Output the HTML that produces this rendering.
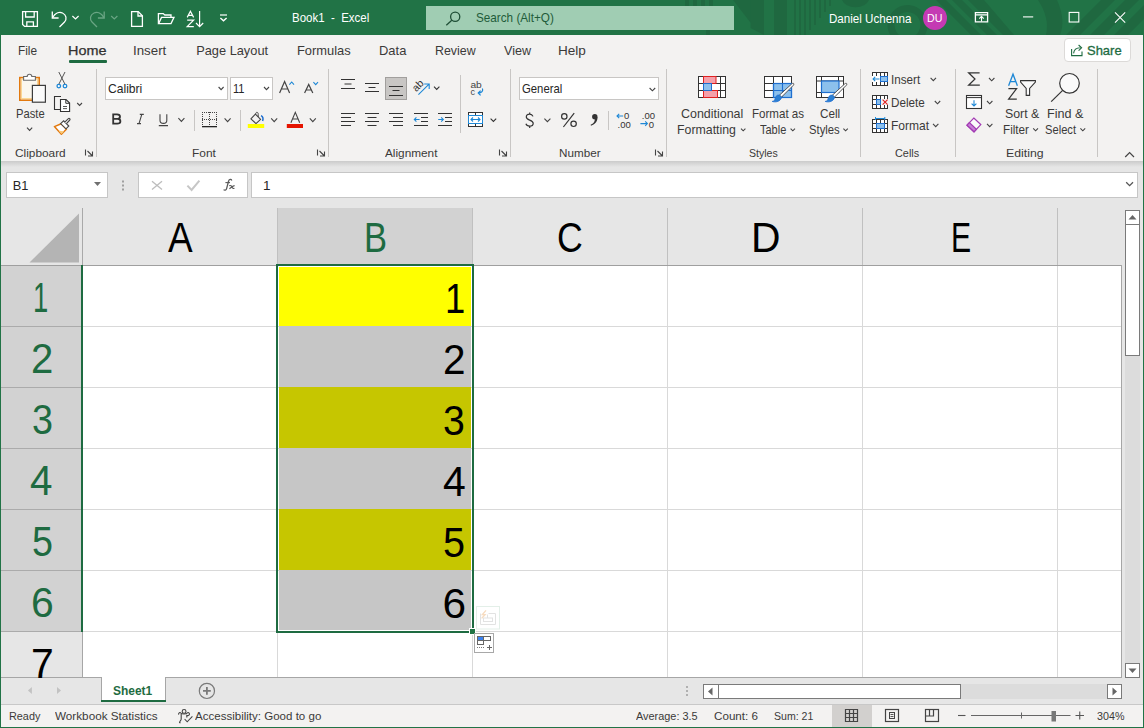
<!DOCTYPE html>
<html><head><meta charset="utf-8">
<style>
*{margin:0;padding:0;box-sizing:border-box}
html,body{width:1144px;height:728px;overflow:hidden;background:#f3f2f1;font-family:"Liberation Sans",sans-serif;color:#262626;position:relative}
.a{position:absolute}
.t{position:absolute;white-space:pre}
svg{position:absolute;overflow:visible}
</style></head><body>
<div class="a" style="left:0;top:0;width:1144px;height:728px;background:#f3f2f1"></div>
<div class="a" style="left:0;top:0;width:1144px;height:35px;background:#217346;overflow:hidden">
<svg width="1144" height="35" style="left:0;top:0"><g fill="#1f6840">
<rect x="685" y="0" width="4" height="7"/><rect x="693" y="0" width="4" height="7"/><rect x="701" y="0" width="4" height="7"/><rect x="709" y="0" width="4" height="7"/>
<rect x="706" y="29" width="4" height="6"/>
<polygon points="733,0 750.8,0 750.8,23"/>
<polygon points="750.6,0 764,0 764,35 750.6,28"/>
<rect x="774" y="0" width="13" height="35"/>
<rect x="794" y="0" width="2" height="35"/><rect x="799" y="0" width="2" height="35"/><rect x="804" y="0" width="2" height="35"/><rect x="809" y="0" width="2" height="30"/><rect x="814" y="0" width="2" height="25"/><rect x="819" y="0" width="2" height="18"/><rect x="824" y="0" width="2" height="12"/><rect x="829" y="0" width="2" height="6"/>
<path d="M842,0 A14,10 0 0 0 869,0 Z"/>
<path d="M907.5,5 A20,20 0 1 0 907.6,5 Z M907.5,12 A13,13 0 1 1 907.4,12 Z" fill-rule="evenodd"/>
<polygon points="936,0 946,0 981,35 971,35"/><polygon points="952,0 962,0 997,35 987,35"/><polygon points="968,0 984,0 1014,35 1003,35"/>
<path d="M1038,0 L1057,0 Q1066,20 1060,35 L1046,35 Q1050,18 1038,0 Z"/>
<polygon points="1066,35 1080,35 1115,0 1101,0"/><polygon points="1090,35 1104,35 1139,0 1125,0"/><polygon points="1114,35 1128,35 1144,19 1144,5"/>
</g></svg>

</div>
<div class="a" style="left:426px;top:6px;width:308px;height:24px;background:#a0cdb3"></div>
<div class="a" style="left:923px;top:6px;width:24px;height:24px;border-radius:12px;background:#c43ab3"></div>
<svg width="1144" height="35" style="left:0;top:0" fill="none" stroke="#fff" stroke-width="1.3">
<!-- save -->
<path d="M22.6,11.6 H37.4 V26.4 H24.6 L22.6,24.4 Z"/>
<path d="M25.6,11.6 V17 H34.2 V11.6"/>
<path d="M26.8,26.4 V21.8 H33.4 V26.4"/>
<!-- undo -->
<path d="M52.3,11.5 V18 H58.6"/>
<path d="M52.6,17.6 C55,13.5 59,11.5 62.5,13 C66.5,14.8 67,19.5 64.5,22 L59.5,27"/>
<path d="M72.4,16 L75.5,19 L78.6,16" stroke-width="1.2"/>
<!-- redo faded -->
<g stroke="#6aa584">
<path d="M104.2,11.5 V18 H97.9"/>
<path d="M103.9,17.6 C101.5,13.5 97.5,11.5 94,13 C90,14.8 89.5,19.5 92,22 L97,27"/>
<path d="M111.2,16 L114.3,19 L117.4,16" stroke-width="1.2"/>
</g>
<!-- new doc -->
<path d="M131.6,11.6 H138.2 L142.4,15.8 V26.4 H131.6 Z"/>
<path d="M138,11.6 V16 H142.4"/>
<!-- open folder -->
<path d="M158.4,23.6 V13.6 H163.2 L164.8,15 H171 V17.4"/>
<path d="M158.6,23.6 L161.5,17.4 H174 L171,23.6 Z"/>
<!-- sort AZ -->
<path d="M187.2,17.4 L190.4,11.2 L193.6,17.4 M188.2,15.4 H192.6" stroke-width="1.2"/>
<path d="M187.2,20.2 H193.6 L187.2,26.6 H193.8" stroke-width="1.2"/>
<path d="M199.6,11 V26.6 M196,23 L199.6,26.6 L203.2,23" stroke-width="1.2"/>
<!-- customize -->
<path d="M220,15 H227" stroke-width="1.2"/>
<path d="M220.4,18 L223.5,20.8 L226.6,18" stroke-width="1.4"/>
<!-- search -->
<g stroke="#1f4e36" stroke-width="1.3"><circle cx="455.2" cy="16.8" r="4.6"/><path d="M451.8,20.3 L446.3,25.3"/></g>
<!-- ribbon display -->
<path d="M975.4,12.6 H987.6 V21.8 H975.4 Z M975.4,14.8 H987.6"/>
<path d="M981.5,21.6 V16.6 M979.3,18.6 L981.5,16.4 L983.7,18.6" stroke-width="1.1"/>
<!-- minimize -->
<path d="M1023,16.9 H1033.2" stroke-width="1.1"/>
<!-- maximize -->
<rect x="1069.2" y="12.4" width="9.6" height="9.6" stroke-width="1.1"/>
<!-- close -->
<path d="M1115,12.4 L1125.2,22.6 M1125.2,12.4 L1115,22.6" stroke-width="1.1"/>
</svg>

<div class="a" style="left:1px;top:35px;width:1142px;height:126px;background:#f3f2f1"></div>
<div class="a" style="left:69px;top:60px;width:38px;height:3px;background:#1e6b41;border-radius:1px"></div>
<div class="a" style="left:1063.5px;top:38px;width:67px;height:23.5px;background:#fff;border:1px solid #dcdad8;border-radius:4px"></div>
<div class="a" style="left:96px;top:69px;width:1px;height:88px;background:#c8c6c4"></div>
<div class="a" style="left:328px;top:69px;width:1px;height:88px;background:#c8c6c4"></div>
<div class="a" style="left:510px;top:69px;width:1px;height:88px;background:#c8c6c4"></div>
<div class="a" style="left:666px;top:69px;width:1px;height:88px;background:#c8c6c4"></div>
<div class="a" style="left:860px;top:69px;width:1px;height:88px;background:#c8c6c4"></div>
<div class="a" style="left:955px;top:69px;width:1px;height:88px;background:#c8c6c4"></div>
<div class="a" style="left:1097px;top:69px;width:1px;height:88px;background:#c8c6c4"></div>
<div class="a" style="left:194px;top:110px;width:1px;height:21px;background:#c8c6c4"></div>
<div class="a" style="left:240px;top:110px;width:1px;height:21px;background:#c8c6c4"></div>
<div class="a" style="left:460px;top:75px;width:1px;height:58px;background:#c8c6c4"></div>
<div class="a" style="left:608px;top:111px;width:1px;height:19px;background:#c8c6c4"></div>
<div class="a" style="left:105px;top:77px;width:123px;height:23px;background:#fff;border:1px solid #c8c6c4"></div>
<div class="a" style="left:230px;top:77px;width:43px;height:23px;background:#fff;border:1px solid #c8c6c4"></div>
<div class="a" style="left:519px;top:77px;width:140px;height:23px;background:#fff;border:1px solid #c8c6c4"></div>
<div class="a" style="left:385px;top:77px;width:22px;height:23px;background:#c8c6c4;border:1px solid #a19f9d"></div>
<svg width="1144" height="170" style="left:0;top:0" fill="none" stroke-linejoin="miter">
<!-- ===== Clipboard ===== -->
<rect x="19.8" y="77.6" width="19.4" height="22.6" fill="#fbf7ee" stroke="#e2790f" stroke-width="1.6"/>
<rect x="21.4" y="79.2" width="16.2" height="19.4" fill="none" stroke="#fbd38a" stroke-width="1"/>
<path d="M23.6,80.3 V76.5 H27.2 A2.3,2.3 0 0 1 31.8,76.5 H35.4 V80.3 Z" fill="#fff" stroke="#6b6b6b" stroke-width="1.1"/>
<rect x="32.4" y="85.4" width="13" height="16.8" fill="#fafafa" stroke="#3c3c3c" stroke-width="1.2"/>
<!-- scissors -->
<path d="M58.8,72 L65,84.3 M65,72 L58.8,84.3" stroke="#555" stroke-width="1"/>
<circle cx="58.8" cy="86.1" r="1.8" fill="#fff" stroke="#1e88d6" stroke-width="1.3"/>
<circle cx="65" cy="86.1" r="1.8" fill="#fff" stroke="#1e88d6" stroke-width="1.3"/>
<!-- copy -->
<path d="M61,96.5 H54.5 V109.5 H60" stroke="#333" stroke-width="1.1"/>
<path d="M60.5,99.5 H66 L69.6,103.1 V111.5 H60.5 Z" fill="#fff" stroke="#333" stroke-width="1.1" stroke-linejoin="miter"/>
<path d="M65.8,99.6 V103.3 H69.6" stroke="#333" stroke-width="1"/>
<path d="M63,106.5 H67 M63,108.6 H67" stroke="#444" stroke-width="0.9"/>
<path d="M77.2,103 L79.6,105.4 L82,103" stroke="#444" stroke-width="1.1"/>
<!-- format painter -->
<path d="M54.4,126.6 L61.2,123.8 L66.4,129.2 L61.4,134.2 Z" fill="#fff" stroke="#e2790f" stroke-width="1.5" stroke-linejoin="round"/>
<path d="M58.4,130.4 L64.2,131.4 L61.4,134 Z" fill="#f9c978"/>
<path d="M60.6,123.6 L63.6,120.8 L68.8,126 L66,128.8 Z" fill="#fff" stroke="#444" stroke-width="1.1"/>
<path d="M64.8,122.2 L68.4,118.6 C69.2,117.8 70.6,119.2 69.8,120 L66.4,123.6" fill="#fff" stroke="#444" stroke-width="1.1"/>
<path d="M27,127.6 L29.6,130.4 L32.2,127.6" stroke="#444" stroke-width="1.1"/>
<!-- launchers -->
<g stroke="#444" stroke-width="1.1">
<path d="M85.5,149.5 V155.5 M87.5,151 L92,155.5 M88,156 H92.5 V151.5"/>
<path d="M317.5,149.5 V155.5 M319.5,151 L324,155.5 M320,156 H324.5 V151.5"/>
<path d="M499.5,149.5 V155.5 M501.5,151 L506,155.5 M502,156 H506.5 V151.5"/>
<path d="M655.5,149.5 V155.5 M657.5,151 L662,155.5 M658,156 H662.5 V151.5"/>
</g>
<!-- ===== Font ===== -->
<g stroke="#444" stroke-width="1.1">
<path d="M218.6,87 L221.1,89.6 L223.6,87"/>
<path d="M264,87 L266.5,89.6 L269,87"/>
<path d="M178.4,118.2 L181.4,121.4 L184.4,118.2"/>
<path d="M224.6,118.4 L227.6,121.6 L230.6,118.4"/>
<path d="M271.2,118.4 L274.2,121.6 L277.2,118.4"/>
<path d="M309.8,118.4 L312.8,121.6 L315.8,118.4"/>
</g>
<!-- grow/shrink font -->
<path d="M279.6,93 L284.6,81.6 L289.6,93 M281.4,89 H287.8" stroke="#444" stroke-width="1.2"/>
<path d="M289.4,84.6 L291.7,82 L294,84.6" stroke="#1e88d6" stroke-width="1.1"/>
<path d="M304.6,93 L308.7,84.4 L312.8,93 M306,90 H311.4" stroke="#444" stroke-width="1.2"/>
<path d="M313.4,82.2 L315.7,84.6 L318,82.2" stroke="#1e88d6" stroke-width="1.1"/>
<!-- B I U -->
<path d="M113.2,114.4 H117 C119.2,114.4 120,115.6 120,116.8 C120,118 119,118.8 117.6,118.8 C119.4,118.8 120.4,119.8 120.4,121.2 C120.4,122.6 119.4,123.6 117.2,123.6 H113.2 Z M113.2,118.8 H117.6" stroke="#333" stroke-width="1.8"/>
<path d="M139.8,114.4 H143.8 M137,123.6 H141 M141.8,114.4 L139,123.6" stroke="#444" stroke-width="1.1"/>
<path d="M160,114.2 V120.2 C160,122.2 161.4,123.4 163.4,123.4 C165.4,123.4 166.8,122.2 166.8,120.2 V114.2 M158.8,125.6 H168" stroke="#444" stroke-width="1.1"/>
<!-- borders -->
<g fill="#444">
<rect x="202" y="112" width="1" height="1"/>
<rect x="202" y="119" width="1" height="1"/>
<rect x="204" y="112" width="1" height="1"/>
<rect x="204" y="119" width="1" height="1"/>
<rect x="206" y="112" width="1" height="1"/>
<rect x="206" y="119" width="1" height="1"/>
<rect x="208" y="112" width="1" height="1"/>
<rect x="208" y="119" width="1" height="1"/>
<rect x="210" y="112" width="1" height="1"/>
<rect x="210" y="119" width="1" height="1"/>
<rect x="212" y="112" width="1" height="1"/>
<rect x="212" y="119" width="1" height="1"/>
<rect x="214" y="112" width="1" height="1"/>
<rect x="214" y="119" width="1" height="1"/>
<rect x="216" y="112" width="1" height="1"/>
<rect x="216" y="119" width="1" height="1"/>
<rect x="202" y="112" width="1" height="1"/>
<rect x="216" y="112" width="1" height="1"/>
<rect x="209" y="112" width="1" height="1"/>
<rect x="202" y="114" width="1" height="1"/>
<rect x="216" y="114" width="1" height="1"/>
<rect x="209" y="114" width="1" height="1"/>
<rect x="202" y="116" width="1" height="1"/>
<rect x="216" y="116" width="1" height="1"/>
<rect x="209" y="116" width="1" height="1"/>
<rect x="202" y="118" width="1" height="1"/>
<rect x="216" y="118" width="1" height="1"/>
<rect x="209" y="118" width="1" height="1"/>
<rect x="202" y="120" width="1" height="1"/>
<rect x="216" y="120" width="1" height="1"/>
<rect x="209" y="120" width="1" height="1"/>
<rect x="202" y="122" width="1" height="1"/>
<rect x="216" y="122" width="1" height="1"/>
<rect x="209" y="122" width="1" height="1"/>
<rect x="202" y="124" width="1" height="1"/>
<rect x="216" y="124" width="1" height="1"/>
<rect x="209" y="124" width="1" height="1"/>
</g>
<rect x="202" y="126" width="15" height="1.3" fill="#222"/>
<!-- fill color -->
<path d="M250.9,118.8 L255.4,114.2 L260.6,119.4 L256,123.6 Z" stroke="#444" stroke-width="1.1" stroke-linejoin="round"/>
<path d="M255.6,114.4 C255.6,111.6 258.4,111.6 258.2,114.4 V117" stroke="#444" stroke-width="1"/>
<path d="M261,115.6 C262.8,116.4 263.4,118.6 262.6,121" stroke="#1e6fd0" stroke-width="1.5"/>
<rect x="247.8" y="124" width="16.4" height="4" fill="#ffff00"/>
<!-- font color -->
<path d="M290.9,122.8 L295.3,112.3 L299.7,122.8 M292.4,119 H298.2" stroke="#444" stroke-width="1.1"/>
<rect x="286.8" y="124" width="16.2" height="4" fill="#e51400"/>
<!-- ===== Alignment ===== -->
<g stroke="#333" stroke-width="1">
<path d="M341,79.5 H355 M344.5,84 H351.5 M341,88.5 H355"/>
<path d="M365,83.5 H379 M368.5,87.5 H375.5 M365,91.5 H379"/>
<path d="M389,86.5 H403 M392.5,90.5 H399.5 M389,95.5 H403"/>
<path d="M341,113.5 H355 M341,117.5 H351 M341,121.5 H355 M341,125.5 H351"/>
<path d="M365,113.5 H379 M367.5,117.5 H376.5 M365,121.5 H379 M367.5,125.5 H376.5"/>
<path d="M389,113.5 H403 M393,117.5 H403 M389,121.5 H403 M393,125.5 H403"/>
<path d="M414,113.5 H428 M421,117.5 H428 M421,121.5 H428 M414,125.5 H428"/>
<path d="M438,113.5 H452 M445,117.5 H452 M445,121.5 H452 M438,125.5 H452"/>
</g>
<g stroke="#333" stroke-width="1.1">
<path d="M434,86.6 L436.7,89.4 L439.4,86.6"/>
<path d="M490.6,118.6 L493.4,121.4 L496.2,118.6"/>
</g>
<path d="M414.4,119.5 H419.6 M416.4,117.4 L414.3,119.5 L416.4,121.6" stroke="#1e88d6" stroke-width="1.1"/>
<path d="M438.2,119.5 H443.2 M441.2,117.4 L443.3,119.5 L441.2,121.6" stroke="#1e88d6" stroke-width="1.1"/>
<!-- orientation ab -->
<text x="0" y="0" transform="translate(416.2,92.2) rotate(-45)" font-family="Liberation Sans" font-size="10.5" fill="#333">ab</text>
<path d="M418.4,94.6 L428.8,84.4 M424.2,84 H429.2 V89" stroke="#1e88d6" stroke-width="1.1"/>
<!-- wrap text -->
<text x="470.4" y="87.6" font-family="Liberation Sans" font-size="9" fill="#444" textLength="11.4" lengthAdjust="spacingAndGlyphs">ab</text>
<text x="470.4" y="95.2" font-family="Liberation Sans" font-size="9" fill="#444">c</text>
<path d="M482.4,88.6 C483.4,90.8 481.8,93 478.4,93 M480.6,90.6 L478.2,93 L480.6,95.4" stroke="#1e88d6" stroke-width="1.2"/>
<!-- merge center -->
<rect x="468.5" y="112.5" width="14" height="14" fill="#fff" stroke="#333" stroke-width="1"/>
<path d="M475.5,112.5 V115.5 M475.5,123.5 V126.5" stroke="#333" stroke-width="1"/>
<rect x="468.5" y="115.5" width="14" height="8" fill="#fff" stroke="#1e88d6" stroke-width="1"/>
<path d="M471,119.5 H480 M473,117.5 L471,119.5 L473,121.5 M478,117.5 L480,119.5 L478,121.5" stroke="#1e88d6" stroke-width="1.1"/>
<!-- ===== Number ===== -->
<path d="M649.6,88 L652.4,90.8 L655.2,88" stroke="#444" stroke-width="1.1"/>
<path d="M544.4,118.6 L547.4,121.6 L550.4,118.6" stroke="#444" stroke-width="1.1"/>
<path d="M529.7,112.4 V114.2 M529.7,126.2 V128 M533,116.4 C532.4,114.9 531.3,114.1 529.6,114.1 C527.6,114.1 526.3,115.3 526.3,117 C526.3,120.6 533.2,119.6 533.2,123.3 C533.2,125 531.7,126.2 529.6,126.2 C527.8,126.2 526.5,125.4 525.9,123.8" stroke="#333" stroke-width="1.2"/>
<circle cx="564.3" cy="116.4" r="2.7" stroke="#333" stroke-width="1.2"/>
<circle cx="573.6" cy="123.8" r="2.7" stroke="#333" stroke-width="1.2"/>
<path d="M574.2,113.2 L563.4,127" stroke="#333" stroke-width="1.2"/>
<circle cx="594.8" cy="116.8" r="2.7" fill="#333"/>
<path d="M597.4,117 C597.8,120.8 595.6,124.2 591,125.8 L590.6,124.8 C593.6,123.4 594.8,121.4 594.8,119.4 Z" fill="#333"/>
<text x="624" y="119" font-family="Liberation Sans" font-size="9.5" fill="#333">0</text>
<text x="617.6" y="127.6" font-family="Liberation Sans" font-size="9.5" fill="#333">.00</text>
<path d="M617,116 H623.2 M619.2,113.8 L617,116 L619.2,118.2" stroke="#1e88d6" stroke-width="1.1"/>
<text x="641.8" y="119" font-family="Liberation Sans" font-size="9.5" fill="#333">.00</text>
<text x="648.8" y="127.6" font-family="Liberation Sans" font-size="9.5" fill="#333">0</text>
<path d="M640.4,123.6 H647.4 M645.2,121.4 L647.4,123.6 L645.2,125.8" stroke="#1e88d6" stroke-width="1.1"/>
</svg>

<svg width="1144" height="170" style="left:0;top:0" fill="none">
<!-- ===== Styles ===== -->
<!-- conditional formatting -->
<rect x="698.5" y="76.5" width="27" height="21" fill="#fff" stroke="#333" stroke-width="1"/>
<path d="M703.5,76.5 V97.5 M720.5,76.5 V97.5 M698.5,83.5 H725.5 M698.5,90.5 H725.5" stroke="#333" stroke-width="1"/>
<rect x="703.5" y="76.5" width="12.5" height="7" fill="#f4a0aa" stroke="#e02020" stroke-width="1"/>
<rect x="703.5" y="90.5" width="14" height="7" fill="#f4a0aa" stroke="#e02020" stroke-width="1"/>
<rect x="703.5" y="83.5" width="8" height="7" fill="#8cc0ec" stroke="#1e6fd0" stroke-width="1"/>
<!-- format as table -->
<rect x="764.5" y="76.5" width="27" height="21" fill="#fff" stroke="#333" stroke-width="1"/>
<rect x="773.5" y="83.5" width="18" height="14" fill="#8cc0ec" stroke="#1e6fd0" stroke-width="1.2"/>
<path d="M773.5,76.5 V97.5 M782.5,76.5 V97.5 M764.5,83.5 H791.5 M764.5,90.5 H791.5" stroke="#333" stroke-width="1"/>
<path d="M773.5,83.5 H791.5 V97.5 H773.5 Z M782.5,83.5 V97.5 M773.5,90.5 H791.5" stroke="#1e6fd0" stroke-width="1.1"/>
<path d="M791.6,84 C793.2,82.6 794.6,83.6 793.4,85.2 L781.6,97 L779.4,95.2 Z" fill="#fff" stroke="#555" stroke-width="1"/>
<path d="M779.4,95 C776,94.6 775.4,97.6 774.8,99.6 C774.4,100.8 773.4,101.4 772.2,101.4 C775.6,102.6 780.6,101.6 781.6,97.2 Z" fill="#2b7fd3" stroke="#1e6fd0" stroke-width="0.8"/>
<!-- cell styles -->
<rect x="816.5" y="76.5" width="27" height="21" fill="#fff" stroke="#333" stroke-width="1"/>
<path d="M816.5,81 H843.5 M816.5,92.5 H821.5 M821.5,76.5 V97.5 M838.5,76.5 V81" stroke="#333" stroke-width="1"/>
<rect x="821.5" y="81" width="17.5" height="11.5" fill="#8cc0ec" stroke="#1e6fd0" stroke-width="1.2"/>
<path d="M844.6,84 C846.2,82.6 847.6,83.6 846.4,85.2 L834.6,97 L832.4,95.2 Z" fill="#fff" stroke="#555" stroke-width="1"/>
<path d="M832.4,95 C829,94.6 828.4,97.6 827.8,99.6 C827.4,100.8 826.4,101.4 825.2,101.4 C828.6,102.6 833.6,101.6 834.6,97.2 Z" fill="#2b7fd3" stroke="#1e6fd0" stroke-width="0.8"/>
<g stroke="#444" stroke-width="1.1">
<path d="M741,128.6 L743.2,130.8 L745.4,128.6"/>
<path d="M790.6,128.6 L792.8,130.8 L795,128.6"/>
<path d="M843.4,128.6 L845.6,130.8 L847.8,128.6"/>
</g>
<!-- ===== Cells ===== -->
<!-- insert -->
<rect x="872.5" y="72.5" width="15" height="13" fill="#fff" stroke="#333" stroke-width="1"/>
<path d="M876.5,72.5 V85.5 M880.5,72.5 V85.5 M884.5,72.5 V85.5 M872.5,76.5 H887.5 M872.5,81.5 H887.5" stroke="#333" stroke-width="1"/>
<rect x="880.5" y="76.5" width="7" height="5" fill="#8cc0ec" stroke="#1e6fd0" stroke-width="1"/>
<rect x="872" y="76" width="8" height="6" fill="#fff"/>
<path d="M873,79 H879.5 M875.2,76.8 L873,79 L875.2,81.2" stroke="#1e88d6" stroke-width="1.1"/>
<!-- delete -->
<rect x="872.5" y="95.5" width="15" height="13" fill="#fff" stroke="#333" stroke-width="1"/>
<path d="M876.5,95.5 V108.5 M880.5,95.5 V108.5 M884.5,95.5 V108.5 M872.5,99.5 H887.5 M872.5,104.5 H887.5" stroke="#333" stroke-width="1"/>
<rect x="881" y="99" width="7" height="6" fill="#f3f2f1"/>
<rect x="876.5" y="99.5" width="4" height="5" fill="#8cc0ec" stroke="#1e6fd0" stroke-width="1"/>
<path d="M882.6,99.6 L887.6,104.6 M887.6,99.6 L882.6,104.6" stroke="#e02020" stroke-width="1.1"/>
<!-- format -->
<rect x="872.5" y="119.5" width="15" height="13" fill="#fff" stroke="#333" stroke-width="1"/>
<path d="M876.5,119.5 V132.5 M880.5,119.5 V132.5 M884.5,119.5 V132.5 M872.5,123.5 H887.5 M872.5,128.5 H887.5" stroke="#333" stroke-width="1"/>
<rect x="876.5" y="123.5" width="8" height="5" fill="#8cc0ec" stroke="#1e6fd0" stroke-width="1"/>
<path d="M875.5,118.5 H884.8 M875.5,117 V120 M884.8,117 V120" stroke="#1e88d6" stroke-width="1"/>
<g stroke="#444" stroke-width="1.1">
<path d="M930.6,77.8 L933.3,80.6 L936,77.8"/>
<path d="M934.8,101 L937.5,103.8 L940.2,101"/>
<path d="M933,123.8 L935.7,126.6 L938.4,123.8"/>
</g>
<!-- ===== Editing ===== -->
<path d="M979.6,72.8 H968.6 L975,79 L968.6,85.2 H979.8" stroke="#333" stroke-width="1.2"/>
<rect x="966.5" y="95.5" width="15" height="13" fill="#fff" stroke="#333" stroke-width="1.1"/>
<path d="M966.5,97.6 H981.5" stroke="#333" stroke-width="1"/>
<path d="M974,100.2 V106 M971.6,103.6 L974,106 L976.4,103.6" stroke="#1e88d6" stroke-width="1.1"/>
<path d="M973.8,118 L980.8,124.6 L974,131.8 L967,125.2 Z" fill="#fafafa" stroke="#a23ab3" stroke-width="1.2"/>
<path d="M967,125.2 L969.4,122.6 L976.4,129.2 L974,131.8 Z" fill="#c77fd6" stroke="#a23ab3" stroke-width="1.2"/>
<g stroke="#444" stroke-width="1.1">
<path d="M989,78 L991.7,80.8 L994.4,78"/>
<path d="M987,101 L989.7,103.8 L992.4,101"/>
<path d="M987,123.8 L989.7,126.6 L992.4,123.8"/>
<path d="M1033.2,128.4 L1035.6,130.8 L1038,128.4"/>
<path d="M1080.4,128.4 L1082.8,130.8 L1085.2,128.4"/>
</g>
<!-- sort filter -->
<path d="M1008.6,85.8 L1013,74.2 L1017.4,85.8 M1010.2,81.6 H1015.8" stroke="#1e88d6" stroke-width="1.3"/>
<path d="M1008.4,88.6 H1016.6 L1008.6,99.2 H1016.8" stroke="#333" stroke-width="1.2"/>
<path d="M1020.6,80.6 H1035.4 V82 L1029.6,88.4 V95.4 H1026.2 V88.4 L1020.6,82 Z" fill="#fafafa" stroke="#333" stroke-width="1.1"/>
<!-- find -->
<circle cx="1069.5" cy="83.3" r="9.8" fill="#fafafa" stroke="#333" stroke-width="1.2"/>
<path d="M1062.4,90.6 L1051.2,101.6" stroke="#333" stroke-width="1.2"/>
<!-- collapse caret -->
<path d="M1125.2,157 L1129.6,152.6 L1134,157" stroke="#444" stroke-width="1.2"/>
<!-- share icon -->
<path d="M1071.6,49 V55.6 H1082 V51.6" stroke="#1e6b41" stroke-width="1.1"/>
<path d="M1073.6,53.4 C1074,49.4 1076.4,47.8 1080.4,47.8 M1078.6,45 L1081.6,47.8 L1078.6,50.6" stroke="#1e6b41" stroke-width="1.1"/>
</svg>

<div class="a" style="left:1px;top:163px;width:1142px;height:45px;background:#e6e6e6"></div>
<div class="a" style="left:1px;top:161px;width:1142px;height:6px;background:linear-gradient(#cbcbcb,#e6e6e6)"></div>
<div class="a" style="left:6px;top:172px;width:102px;height:26px;background:#fff;border:1px solid #c6c6c6"></div>
<div class="a" style="left:138px;top:172px;width:110px;height:26px;background:#fff;border:1px solid #c6c6c6"></div>
<div class="a" style="left:251px;top:172px;width:887px;height:26px;background:#fff;border:1px solid #c6c6c6"></div>
<svg width="1144" height="210" style="left:0;top:0" fill="none">
<polygon points="94,182 101,182 97.5,186" fill="#707070"/>
<rect x="122" y="180.5" width="2" height="2" fill="#a0a0a0"/><rect x="122" y="184.5" width="2" height="2" fill="#a0a0a0"/><rect x="122" y="188.5" width="2" height="2" fill="#a0a0a0"/>
<path d="M152,181.2 L162,189.6 M162,181.2 L152,189.6" stroke="#bdbdbd" stroke-width="1.3"/>
<path d="M187.4,185.6 L191.6,190 L199.4,180.6" stroke="#c6c6c6" stroke-width="2"/>
<path d="M231.8,180.4 C231.2,178.8 229,179 228.6,181 L226.6,188.6 C226.2,190.2 224.6,190.6 223.6,189.6" stroke="#5a5a5a" stroke-width="1.3"/>
<path d="M225.4,182.6 H230" stroke="#5a5a5a" stroke-width="1.1"/>
<path d="M229.2,185.8 C230.6,185.2 231.6,185.8 232,187 C232.4,188.2 233.4,188.8 234.4,188.2 M234.6,185.6 C233,185.6 231.4,187.4 229.4,188.8" stroke="#5a5a5a" stroke-width="1.1"/>
<path d="M1126.2,182.2 L1129.6,185.6 L1133,182.2" stroke="#555" stroke-width="1.3"/>
</svg>

<div class="a" style="left:1px;top:208px;width:1124px;height:470px;background:#e6e6e6"></div>
<div class="a" style="left:277px;top:208px;width:196px;height:57px;background:#d2d2d2"></div>
<svg width="82" height="57" style="left:0;top:208px"><polygon points="29.5,54.5 79,5.5 79,54.5" fill="#b4b4b4"/></svg>
<div class="a" style="left:1px;top:266px;width:81px;height:366px;background:#d2d2d2"></div>
<div class="a" style="left:83px;top:266px;width:1038px;height:411px;background:#fff"></div>
<div class="a" style="left:667px;top:266px;width:1px;height:411px;background:#d9d9d9"></div>
<div class="a" style="left:862px;top:266px;width:1px;height:411px;background:#d9d9d9"></div>
<div class="a" style="left:1057px;top:266px;width:1px;height:411px;background:#d9d9d9"></div>
<div class="a" style="left:277px;top:633px;width:1px;height:44px;background:#d9d9d9"></div>
<div class="a" style="left:472px;top:633px;width:1px;height:44px;background:#d9d9d9"></div>
<div class="a" style="left:83px;top:326px;width:1038px;height:1px;background:#d9d9d9"></div>
<div class="a" style="left:1px;top:326px;width:81px;height:1px;background:#ababab"></div>
<div class="a" style="left:83px;top:387px;width:1038px;height:1px;background:#d9d9d9"></div>
<div class="a" style="left:1px;top:387px;width:81px;height:1px;background:#ababab"></div>
<div class="a" style="left:83px;top:448px;width:1038px;height:1px;background:#d9d9d9"></div>
<div class="a" style="left:1px;top:448px;width:81px;height:1px;background:#ababab"></div>
<div class="a" style="left:83px;top:509px;width:1038px;height:1px;background:#d9d9d9"></div>
<div class="a" style="left:1px;top:509px;width:81px;height:1px;background:#ababab"></div>
<div class="a" style="left:83px;top:570px;width:1038px;height:1px;background:#d9d9d9"></div>
<div class="a" style="left:1px;top:570px;width:81px;height:1px;background:#ababab"></div>
<div class="a" style="left:83px;top:631px;width:1038px;height:1px;background:#d9d9d9"></div>
<div class="a" style="left:1px;top:631px;width:81px;height:1px;background:#ababab"></div>
<div class="a" style="left:279px;top:267px;width:192px;height:59px;background:#ffff00"></div>
<div class="a" style="left:279px;top:326px;width:192px;height:61px;background:#c6c6c6"></div>
<div class="a" style="left:279px;top:387px;width:192px;height:61px;background:#c6c600"></div>
<div class="a" style="left:279px;top:448px;width:192px;height:61px;background:#c6c6c6"></div>
<div class="a" style="left:279px;top:509px;width:192px;height:61px;background:#c6c600"></div>
<div class="a" style="left:279px;top:570px;width:192px;height:60px;background:#c6c6c6"></div>
<div class="a" style="left:82px;top:208px;width:1px;height:57px;background:#a9a9a9"></div>
<div class="a" style="left:277px;top:208px;width:1px;height:57px;background:#c0c0c0"></div>
<div class="a" style="left:472px;top:208px;width:1px;height:57px;background:#c0c0c0"></div>
<div class="a" style="left:667px;top:208px;width:1px;height:57px;background:#c0c0c0"></div>
<div class="a" style="left:862px;top:208px;width:1px;height:57px;background:#c0c0c0"></div>
<div class="a" style="left:1057px;top:208px;width:1px;height:57px;background:#c0c0c0"></div>
<div class="a" style="left:1px;top:265px;width:1121px;height:1px;background:#9f9f9f"></div>
<div class="a" style="left:82px;top:632px;width:1px;height:45px;background:#a6a6a6"></div>
<div class="a" style="left:1121px;top:265px;width:1px;height:413px;background:#a6a6a6"></div>
<div class="a" style="left:1px;top:677px;width:1121px;height:1px;background:#a6a6a6"></div>
<div class="a" style="left:81px;top:265px;width:2px;height:367px;background:#1e6b41"></div>
<div class="a" style="left:276px;top:264px;width:198px;height:369px;border:2px solid #1e6b41"></div>
<div class="a" style="left:469px;top:628px;width:7px;height:7px;background:#fff"></div>
<div class="a" style="left:470px;top:629px;width:5px;height:5px;background:#217346"></div>
<svg width="1144" height="728" style="left:0;top:0" fill="none">
<!-- quick analysis (faded) -->
<rect x="476.5" y="606.5" width="23" height="22.5" fill="#fff" stroke="#e3efe8" stroke-width="1"/>
<path d="M480.5,613.5 V624.5 H495.5 V613.5 H488.5" stroke="#e2e2e2" stroke-width="1"/>
<rect x="483.5" y="618" width="9" height="3.5" stroke="#e2e2e2" stroke-width="1"/>
<path d="M487.5,614.5 V618" stroke="#e2e2e2" stroke-width="1"/>
<path d="M486,610.4 L482.4,614.6 H485 L481.6,618.4" stroke="#f7dcc0" stroke-width="1.4"/>
<!-- paste options -->
<rect x="474.5" y="633.5" width="19" height="19" fill="#fff" stroke="#a8a8a8" stroke-width="1"/>
<rect x="477.5" y="636.5" width="6" height="4" fill="#3b82f0" stroke="#666" stroke-width="1"/>
<rect x="483.5" y="636.5" width="7" height="4" fill="#fff" stroke="#666" stroke-width="1"/>
<rect x="477.5" y="640.5" width="6" height="4" fill="#fff" stroke="#666" stroke-width="1"/>
<g fill="#777"><rect x="477" y="647" width="1" height="1"/><rect x="479" y="647" width="1" height="1"/><rect x="481" y="647" width="1" height="1"/><rect x="483" y="647" width="1" height="1"/></g>
<path d="M487,647.5 H492 M489.5,645 V650" stroke="#666" stroke-width="1"/>
</svg>

<div class="a" style="left:1122px;top:208px;width:21px;height:470px;background:#e6e6e6"></div>
<div class="a" style="left:1125px;top:210px;width:15px;height:467px;background:#dcdcdc"></div>
<div class="a" style="left:1125px;top:210px;width:15px;height:15px;background:#fff;border:1px solid #7a7a7a"></div>
<div class="a" style="left:1125px;top:224px;width:15px;height:132px;background:#fff;border:1px solid #7a7a7a"></div>
<div class="a" style="left:1125px;top:663px;width:15px;height:15px;background:#fff;border:1px solid #7a7a7a"></div>
<svg width="15" height="15" style="left:1125px;top:210px"><polygon points="3.5,9.5 11.5,9.5 7.5,5" fill="#666"/></svg>
<svg width="15" height="15" style="left:1125px;top:663px"><polygon points="3.5,5.5 11.5,5.5 7.5,10" fill="#666"/></svg>
<div class="a" style="left:1px;top:678px;width:1142px;height:27px;background:#e6e6e6"></div>
<div class="a" style="left:101px;top:677px;width:65px;height:25px;background:#fff;border-left:1px solid #a6a6a6;border-right:1px solid #a6a6a6"></div>
<div class="a" style="left:101px;top:700px;width:65px;height:2px;background:#1e6b41"></div>
<div class="a" style="left:1px;top:677px;width:100px;height:1px;background:#a6a6a6"></div>
<div class="a" style="left:166px;top:677px;width:956px;height:1px;background:#a6a6a6"></div>
<div class="a" style="left:1px;top:704px;width:1142px;height:1px;background:#c8c8c8"></div>
<div class="a" style="left:703px;top:684px;width:419px;height:15px;background:#dcdcdc"></div>
<div class="a" style="left:703px;top:684px;width:16px;height:15px;background:#fff;border:1px solid #7a7a7a"></div>
<div class="a" style="left:718px;top:684px;width:243px;height:15px;background:#fff;border:1px solid #7a7a7a"></div>
<div class="a" style="left:1107px;top:684px;width:15px;height:15px;background:#fff;border:1px solid #7a7a7a"></div>
<svg width="15" height="15" style="left:703px;top:684px"><polygon points="9.5,3.5 9.5,11.5 5,7.5" fill="#666"/></svg>
<svg width="15" height="15" style="left:1107px;top:684px"><polygon points="5.5,3.5 5.5,11.5 10,7.5" fill="#666"/></svg>
<svg width="1144" height="728" style="left:0;top:0" fill="none">
<polygon points="31.9,687 31.9,694 27.9,690.5" fill="#c2c2c2"/>
<polygon points="57,687 57,694 61,690.5" fill="#c2c2c2"/>
<circle cx="206.9" cy="690.9" r="7.6" stroke="#7a7a7a" stroke-width="1.2"/>
<path d="M203,690.9 H210.8 M206.9,687 V694.8" stroke="#7a7a7a" stroke-width="1.8"/>
<rect x="686" y="686" width="2" height="2" fill="#b0b0b0"/><rect x="686" y="690" width="2" height="2" fill="#b0b0b0"/><rect x="686" y="694" width="2" height="2" fill="#b0b0b0"/>
</svg>

<div class="a" style="left:1px;top:705px;width:1142px;height:22px;background:#f3f2f1"></div>
<div class="a" style="left:832px;top:705px;width:40px;height:22px;background:#d2d0ce"></div>
<svg width="1144" height="728" style="left:0;top:0" fill="none">
<!-- accessibility -->
<circle cx="184.1" cy="711.4" r="1.9" stroke="#444" stroke-width="1.1"/>
<path d="M178.6,714.6 C178.4,712.6 180,712 181,713.2 C182,714.2 186,714.2 187,713.2 C188,712 189.8,712.6 189.4,714.6 C189,715.6 187.6,715.8 186.8,715.4 V717.4" stroke="#444" stroke-width="1.1"/>
<path d="M181.2,713.8 V719 C181.2,720.4 180.2,720.8 179.6,722 C179.2,722.6 180,723 180.6,722.6" stroke="#444" stroke-width="1.1"/>
<path d="M184.6,719 L187.2,721.8 L192.4,716.4" stroke="#444" stroke-width="1.1"/>
<!-- normal view -->
<path d="M845.5,709.5 H857.5 V721.5 H845.5 Z M849.5,709.5 V721.5 M853.5,709.5 V721.5 M845.5,713.5 H857.5 M845.5,717.5 H857.5" stroke="#444" stroke-width="1.2"/>
<!-- page layout -->
<rect x="885.5" y="709.5" width="13" height="12" stroke="#444" stroke-width="1.2"/>
<rect x="889.5" y="712.5" width="5" height="6" stroke="#444" stroke-width="1"/>
<path d="M890.5,714.5 H893.5 M890.5,716.5 H893.5" stroke="#444" stroke-width="0.9"/>
<!-- page break -->
<rect x="925.5" y="709.5" width="13" height="12" stroke="#444" stroke-width="1.2"/>
<path d="M929.5,709.5 V716 M933.5,709.5 V716 H925.5" stroke="#444" stroke-width="1.2"/>
<!-- zoom slider -->
<path d="M958,715.5 H965.5" stroke="#555" stroke-width="1.1"/>
<path d="M971,715.5 H1070.5" stroke="#666" stroke-width="1"/>
<path d="M1021.5,712.5 V718.5" stroke="#666" stroke-width="1"/>
<rect x="1051.5" y="711" width="4.5" height="10.5" fill="#777"/>
<path d="M1075.5,715.5 H1084 M1079.75,711.5 V719.5" stroke="#555" stroke-width="1.1"/>
</svg>

<div class="a" style="left:0;top:35px;width:1px;height:693px;background:#217346"></div>
<div class="a" style="left:1143px;top:35px;width:1px;height:693px;background:#217346"></div>
<div class="a" style="left:0;top:727px;width:1144px;height:1px;background:#217346"></div>
<!-- texts -->
<div class="t" style="left:291.90px;top:12.16px;font-size:12.80px;line-height:12.80px;color:#ffffff;transform:scaleX(0.897);transform-origin:0 0;">Book1  -  Excel</div>
<div class="t" style="left:475.93px;top:12.16px;font-size:12.80px;line-height:12.80px;color:#1f5c3a;transform:scaleX(0.916);transform-origin:0 0;">Search (Alt+Q)</div>
<div class="t" style="left:828.99px;top:13.16px;font-size:12.80px;line-height:12.80px;color:#ffffff;transform:scaleX(0.905);transform-origin:0 0;">Daniel Uchenna</div>
<div class="t" style="left:926.97px;top:13.37px;font-size:11.38px;line-height:11.38px;color:#ffffff;transform:scaleX(0.933);transform-origin:0 0;">DU</div>
<div class="t" style="left:17.77px;top:45.16px;font-size:12.80px;line-height:12.80px;color:#3b3a39;transform:scaleX(0.926);transform-origin:0 0;">File</div>
<div class="t" style="left:132.66px;top:45.16px;font-size:12.80px;line-height:12.80px;color:#3b3a39;transform:scaleX(1.040);transform-origin:0 0;">Insert</div>
<div class="t" style="left:196.20px;top:45.16px;font-size:12.80px;line-height:12.80px;color:#3b3a39;">Page Layout</div>
<div class="t" style="left:297.19px;top:45.16px;font-size:12.80px;line-height:12.80px;color:#3b3a39;transform:scaleX(1.007);transform-origin:0 0;">Formulas</div>
<div class="t" style="left:378.99px;top:45.16px;font-size:12.80px;line-height:12.80px;color:#3b3a39;transform:scaleX(1.011);transform-origin:0 0;">Data</div>
<div class="t" style="left:435.03px;top:45.16px;font-size:12.80px;line-height:12.80px;color:#3b3a39;transform:scaleX(0.968);transform-origin:0 0;">Review</div>
<div class="t" style="left:503.80px;top:45.16px;font-size:12.80px;line-height:12.80px;color:#3b3a39;transform:scaleX(0.983);transform-origin:0 0;">View</div>
<div class="t" style="left:558.14px;top:45.16px;font-size:12.80px;line-height:12.80px;color:#3b3a39;transform:scaleX(1.060);transform-origin:0 0;">Help</div>
<div class="t" style="left:68.38px;top:45.16px;font-size:12.80px;line-height:12.80px;color:#323130;transform:scaleX(1.125);transform-origin:0 0;-webkit-text-stroke:0.25px #323130;">Home</div>
<div class="t" style="left:1086.69px;top:45.16px;font-size:12.80px;line-height:12.80px;color:#1e6b41;transform:scaleX(1.014);transform-origin:0 0;-webkit-text-stroke:0.3px #1e6b41;">Share</div>
<div class="t" style="left:15.83px;top:108.16px;font-size:12.80px;line-height:12.80px;color:#3b3a39;transform:scaleX(0.875);transform-origin:0 0;">Paste</div>
<div class="t" style="left:108.03px;top:83.16px;font-size:12.80px;line-height:12.80px;color:#262626;transform:scaleX(0.945);transform-origin:0 0;">Calibri</div>
<div class="t" style="left:232.90px;top:83.16px;font-size:12.80px;line-height:12.80px;color:#262626;transform:scaleX(0.869);transform-origin:0 0;">11</div>
<div class="t" style="left:522.07px;top:83.16px;font-size:12.80px;line-height:12.80px;color:#262626;transform:scaleX(0.884);transform-origin:0 0;">General</div>
<div class="t" style="left:15.14px;top:148.37px;font-size:11.38px;line-height:11.38px;color:#3b3a39;transform:scaleX(1.041);transform-origin:0 0;">Clipboard</div>
<div class="t" style="left:191.77px;top:148.37px;font-size:11.38px;line-height:11.38px;color:#3b3a39;transform:scaleX(1.049);transform-origin:0 0;">Font</div>
<div class="t" style="left:385.10px;top:148.37px;font-size:11.38px;line-height:11.38px;color:#3b3a39;transform:scaleX(1.037);transform-origin:0 0;">Alignment</div>
<div class="t" style="left:559.49px;top:148.37px;font-size:11.38px;line-height:11.38px;color:#3b3a39;transform:scaleX(1.027);transform-origin:0 0;">Number</div>
<div class="t" style="left:749.07px;top:148.37px;font-size:11.38px;line-height:11.38px;color:#3b3a39;transform:scaleX(0.928);transform-origin:0 0;">Styles</div>
<div class="t" style="left:894.89px;top:148.37px;font-size:11.38px;line-height:11.38px;color:#3b3a39;transform:scaleX(0.955);transform-origin:0 0;">Cells</div>
<div class="t" style="left:1006.34px;top:148.37px;font-size:11.38px;line-height:11.38px;color:#3b3a39;transform:scaleX(1.079);transform-origin:0 0;">Editing</div>
<div class="t" style="left:681.02px;top:108.16px;font-size:12.80px;line-height:12.80px;color:#3b3a39;transform:scaleX(0.973);transform-origin:0 0;">Conditional</div>
<div class="t" style="left:677.04px;top:124.16px;font-size:12.80px;line-height:12.80px;color:#3b3a39;transform:scaleX(0.964);transform-origin:0 0;">Formatting</div>
<div class="t" style="left:751.80px;top:108.16px;font-size:12.80px;line-height:12.80px;color:#3b3a39;transform:scaleX(0.904);transform-origin:0 0;">Format as</div>
<div class="t" style="left:759.83px;top:124.16px;font-size:12.80px;line-height:12.80px;color:#3b3a39;transform:scaleX(0.860);transform-origin:0 0;">Table</div>
<div class="t" style="left:820.05px;top:108.16px;font-size:12.80px;line-height:12.80px;color:#3b3a39;transform:scaleX(0.917);transform-origin:0 0;">Cell</div>
<div class="t" style="left:808.65px;top:124.16px;font-size:12.80px;line-height:12.80px;color:#3b3a39;transform:scaleX(0.881);transform-origin:0 0;">Styles</div>
<div class="t" style="left:890.69px;top:74.16px;font-size:12.80px;line-height:12.80px;color:#3b3a39;transform:scaleX(0.911);transform-origin:0 0;">Insert</div>
<div class="t" style="left:890.69px;top:97.16px;font-size:12.80px;line-height:12.80px;color:#3b3a39;transform:scaleX(0.913);transform-origin:0 0;">Delete</div>
<div class="t" style="left:890.66px;top:120.16px;font-size:12.80px;line-height:12.80px;color:#3b3a39;transform:scaleX(0.940);transform-origin:0 0;">Format</div>
<div class="t" style="left:1004.71px;top:108.16px;font-size:12.80px;line-height:12.80px;color:#3b3a39;transform:scaleX(0.965);transform-origin:0 0;">Sort &amp;</div>
<div class="t" style="left:1002.59px;top:124.16px;font-size:12.80px;line-height:12.80px;color:#3b3a39;transform:scaleX(0.913);transform-origin:0 0;">Filter</div>
<div class="t" style="left:1047.41px;top:108.16px;font-size:12.80px;line-height:12.80px;color:#3b3a39;transform:scaleX(0.987);transform-origin:0 0;">Find &amp;</div>
<div class="t" style="left:1044.85px;top:124.16px;font-size:12.80px;line-height:12.80px;color:#3b3a39;transform:scaleX(0.872);transform-origin:0 0;">Select</div>
<div class="t" style="left:12.70px;top:180.16px;font-size:12.80px;line-height:12.80px;color:#262626;">B1</div>
<div class="t" style="left:263.06px;top:180.16px;font-size:12.80px;line-height:12.80px;color:#262626;transform:scaleX(1.052);transform-origin:0 0;">1</div>
<div class="t" style="left:167.70px;top:217.12px;font-size:42.38px;line-height:42.38px;color:#000000;transform:scaleX(0.871);transform-origin:0 0;">A</div>
<div class="t" style="left:557.42px;top:217.12px;font-size:42.38px;line-height:42.38px;color:#000000;transform:scaleX(0.843);transform-origin:0 0;">C</div>
<div class="t" style="left:750.61px;top:217.12px;font-size:42.38px;line-height:42.38px;color:#000000;transform:scaleX(0.964);transform-origin:0 0;">D</div>
<div class="t" style="left:950.74px;top:217.12px;font-size:42.38px;line-height:42.38px;color:#000000;transform:scaleX(0.712);transform-origin:0 0;">E</div>
<div class="t" style="left:363.50px;top:217.12px;font-size:42.38px;line-height:42.38px;color:#1e6b41;transform:scaleX(0.815);transform-origin:0 0;">B</div>
<div class="t" style="left:32.89px;top:277.12px;font-size:42.38px;line-height:42.38px;color:#1e6b41;transform:scaleX(0.646);transform-origin:0 0;">1</div>
<div class="t" style="left:30.82px;top:338.12px;font-size:42.38px;line-height:42.38px;color:#1e6b41;transform:scaleX(0.946);transform-origin:0 0;">2</div>
<div class="t" style="left:31.52px;top:399.12px;font-size:42.38px;line-height:42.38px;color:#1e6b41;transform:scaleX(0.891);transform-origin:0 0;">3</div>
<div class="t" style="left:30.47px;top:460.12px;font-size:42.38px;line-height:42.38px;color:#1e6b41;transform:scaleX(0.952);transform-origin:0 0;">4</div>
<div class="t" style="left:31.52px;top:521.12px;font-size:42.38px;line-height:42.38px;color:#1e6b41;transform:scaleX(0.891);transform-origin:0 0;">5</div>
<div class="t" style="left:30.78px;top:582.12px;font-size:42.38px;line-height:42.38px;color:#1e6b41;transform:scaleX(0.966);transform-origin:0 0;">6</div>
<div class="t" style="left:30.78px;top:643.12px;font-size:42.38px;line-height:42.38px;color:#000000;transform:scaleX(0.966);transform-origin:0 0;">7</div>
<div class="t" style="left:444.52px;top:278.12px;font-size:42.38px;line-height:42.38px;color:#000000;transform:scaleX(0.859);transform-origin:0 0;">1</div>
<div class="t" style="left:442.80px;top:339.12px;font-size:42.38px;line-height:42.38px;color:#000000;transform:scaleX(0.956);transform-origin:0 0;">2</div>
<div class="t" style="left:443.47px;top:400.12px;font-size:42.38px;line-height:42.38px;color:#000000;transform:scaleX(0.926);transform-origin:0 0;">3</div>
<div class="t" style="left:442.66px;top:461.12px;font-size:42.38px;line-height:42.38px;color:#000000;transform:scaleX(0.966);transform-origin:0 0;">4</div>
<div class="t" style="left:443.26px;top:522.12px;font-size:42.38px;line-height:42.38px;color:#000000;transform:scaleX(0.935);transform-origin:0 0;">5</div>
<div class="t" style="left:442.51px;top:583.12px;font-size:42.38px;line-height:42.38px;color:#000000;">6</div>
<div class="t" style="left:113.21px;top:684.47px;font-size:13.62px;line-height:13.62px;color:#1e6b41;font-weight:bold;transform:scaleX(0.880);transform-origin:0 0;">Sheet1</div>
<div class="t" style="left:8.55px;top:711.37px;font-size:11.38px;line-height:11.38px;color:#3b3a39;transform:scaleX(0.953);transform-origin:0 0;">Ready</div>
<div class="t" style="left:55.00px;top:711.37px;font-size:11.38px;line-height:11.38px;color:#3b3a39;transform:scaleX(1.030);transform-origin:0 0;">Workbook Statistics</div>
<div class="t" style="left:195.10px;top:711.37px;font-size:11.38px;line-height:11.38px;color:#3b3a39;transform:scaleX(1.014);transform-origin:0 0;">Accessibility: Good to go</div>
<div class="t" style="left:636.10px;top:711.37px;font-size:11.38px;line-height:11.38px;color:#3b3a39;transform:scaleX(0.958);transform-origin:0 0;">Average: 3.5</div>
<div class="t" style="left:714.05px;top:711.37px;font-size:11.38px;line-height:11.38px;color:#3b3a39;transform:scaleX(1.023);transform-origin:0 0;">Count: 6</div>
<div class="t" style="left:774.07px;top:711.37px;font-size:11.38px;line-height:11.38px;color:#3b3a39;transform:scaleX(0.929);transform-origin:0 0;">Sum: 21</div>
<div class="t" style="left:1097.06px;top:711.37px;font-size:11.38px;line-height:11.38px;color:#3b3a39;transform:scaleX(0.943);transform-origin:0 0;">304%</div>
</body></html>
